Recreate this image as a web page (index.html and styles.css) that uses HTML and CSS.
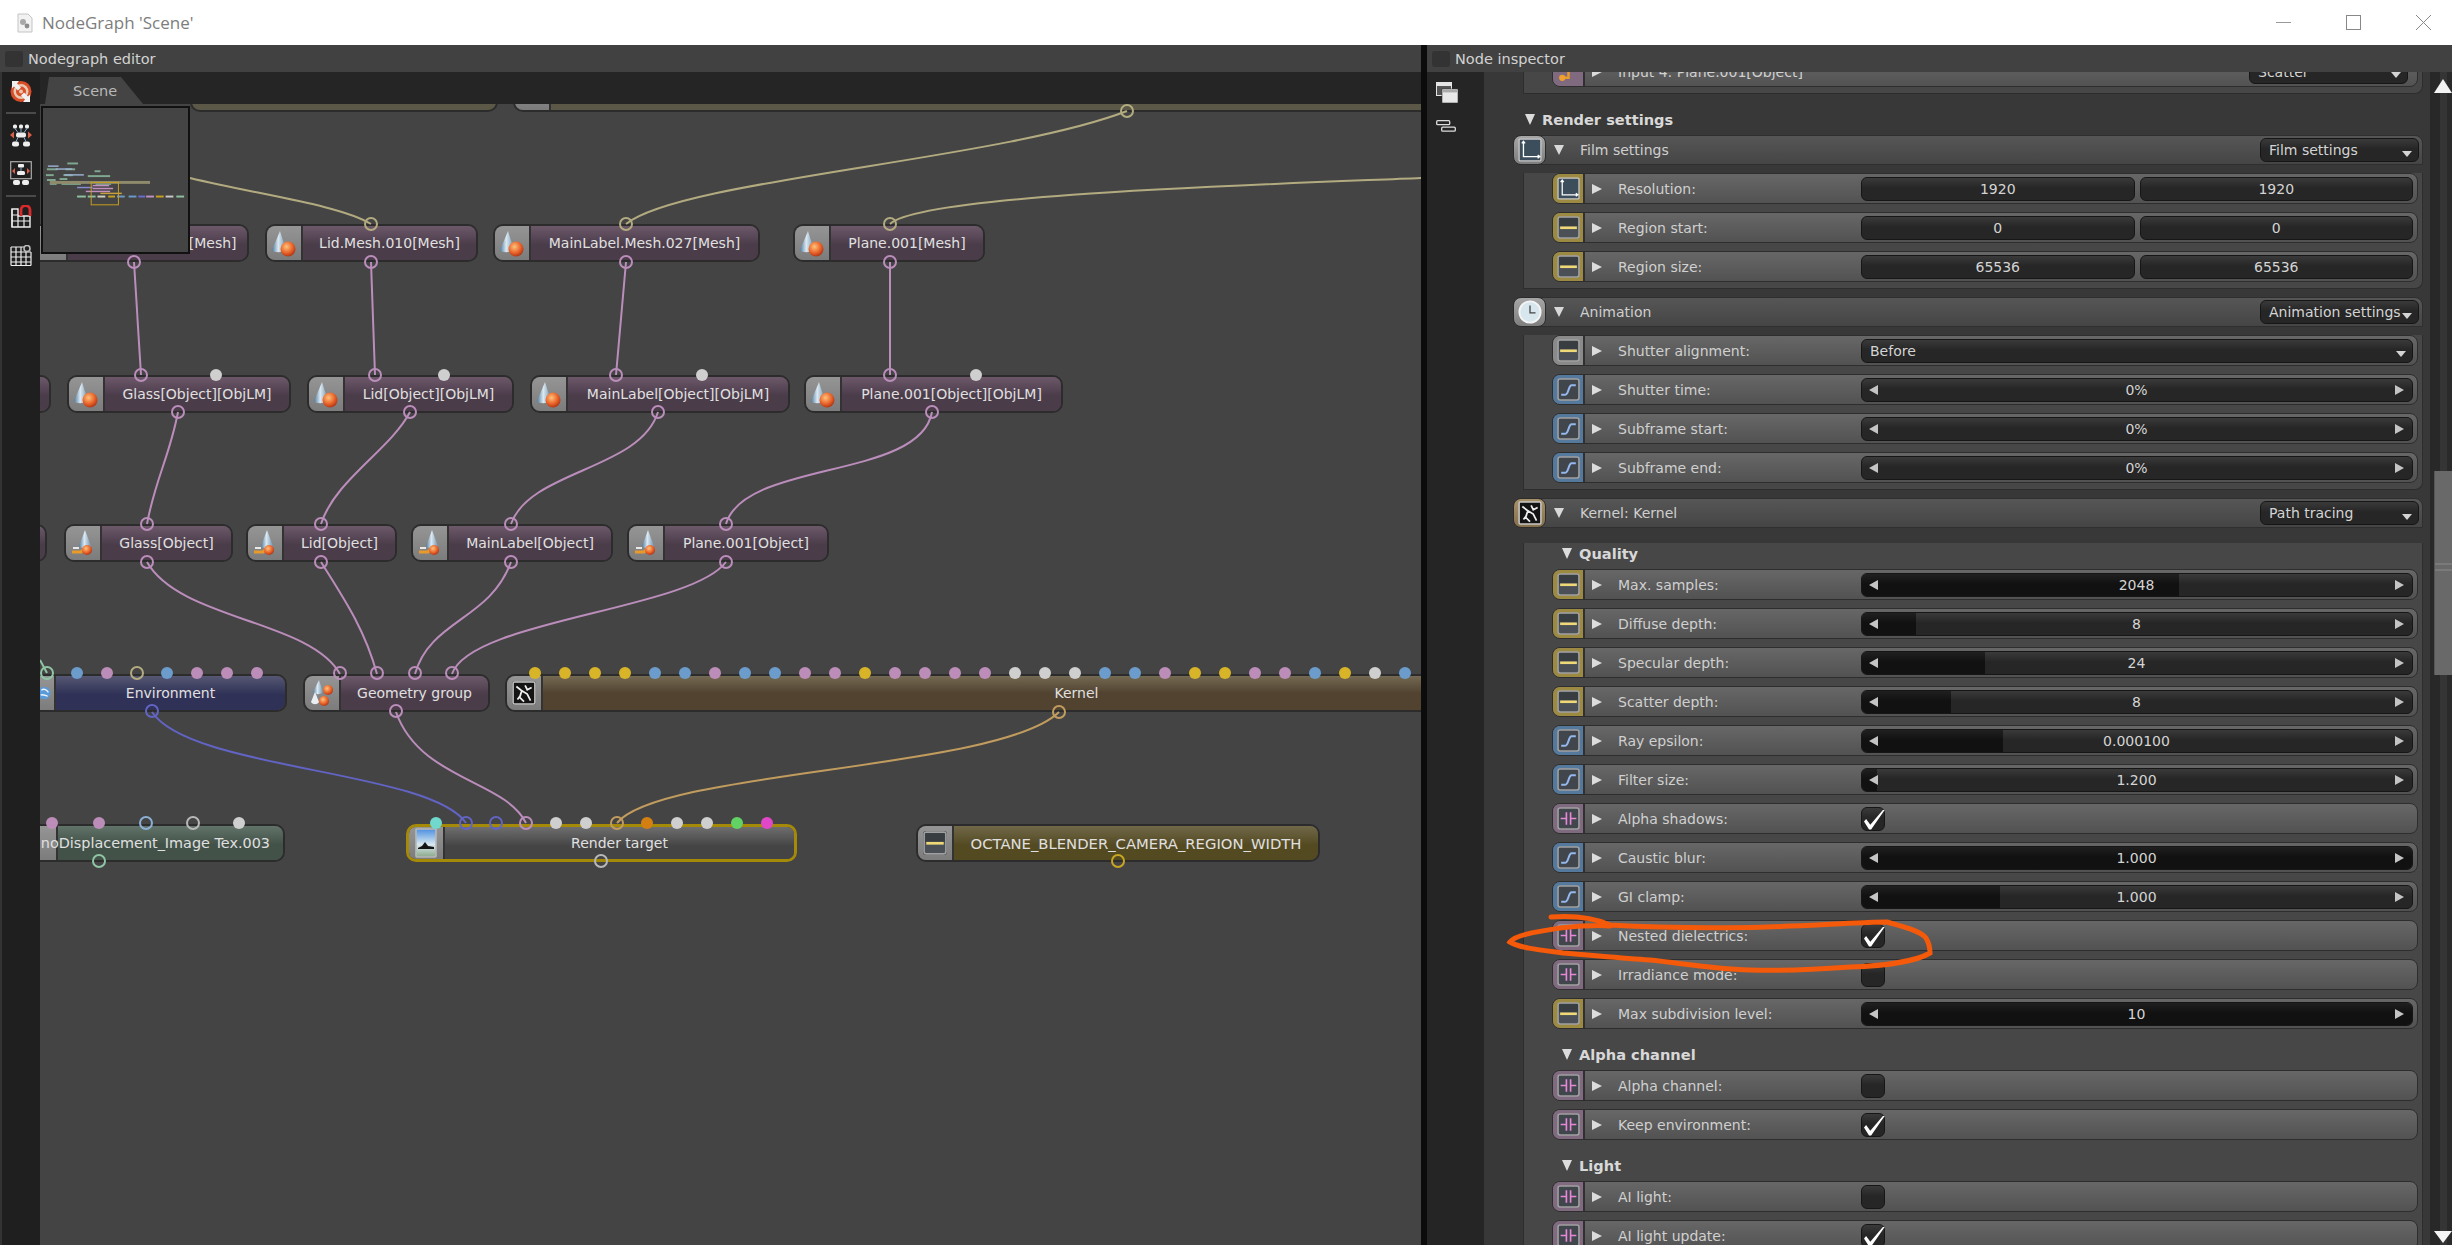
FILE: index.html
```html
<!DOCTYPE html>
<html lang="en">
<head>
    <meta charset="UTF-8">
    <meta name="viewport" content="width=device-width, initial-scale=1.0">
    <title>NodeGraph 'Scene'</title>
    <link rel="stylesheet" href="styles.css">
</head>
<body>

<svg class="sprites" width="0" height="0">
    <defs>
        <linearGradient id="cone" x1="0" y1="0" x2="1" y2="0"><stop offset="0" stop-color="#4f7c9f"/><stop offset="0.45" stop-color="#dce9f2"/><stop offset="1" stop-color="#6f93ad"/></linearGradient>
        <radialGradient id="ball" cx="0.4" cy="0.35" r="0.7"><stop offset="0" stop-color="#ffc27a"/><stop offset="0.6" stop-color="#e8622a"/><stop offset="1" stop-color="#a83010"/></radialGradient>
        <linearGradient id="sky" x1="0" y1="0" x2="0" y2="1"><stop offset="0" stop-color="#4c8fe0"/><stop offset="0.55" stop-color="#d8e8f0"/><stop offset="1" stop-color="#8aa888"/></linearGradient>
    </defs>
    <symbol id="ic-int" viewBox="0 0 22 22"><rect x="1" y="1" width="20" height="20" rx="2" fill="#4a5055" stroke="#a0a0a0" stroke-width="1.5"/><rect x="2" y="2" width="18" height="8" fill="#383d42"/><rect x="3" y="10" width="16" height="2.5" fill="#eed878"/></symbol>
    <symbol id="ic-float" viewBox="0 0 22 22"><rect x="1" y="1" width="20" height="20" rx="2" fill="#40464c" stroke="#a0a0a0" stroke-width="1.5"/><path d="M4 16H8C11 16 11 7 14 7H18" fill="none" stroke="#94b8ee" stroke-width="2"/></symbol>
    <symbol id="ic-bool" viewBox="0 0 22 22"><rect x="1" y="1" width="20" height="20" rx="2" fill="#40464c" stroke="#a0a0a0" stroke-width="1.5"/><path d="M9 5V17M13 5V17M3.5 11H9M13 11H18.5" fill="none" stroke="#e588d8" stroke-width="1.6"/></symbol>
    <symbol id="ic-film" viewBox="0 0 22 22"><rect x="1" y="1" width="20" height="20" rx="1" fill="#3c4e5c" stroke="#c8c8c8" stroke-width="1.2"/><path d="M5 3V17H20M3.5 5L5 3L6.5 5M18 15.5L20 17L18 18.5" fill="none" stroke="#fff" stroke-width="1.2"/></symbol>
    <symbol id="ic-link" viewBox="0 0 22 22"><path d="M5 17H11V8H17" fill="none" stroke="#e89a2a" stroke-width="2.4"/><circle cx="5" cy="17" r="3" fill="#f0a030"/><circle cx="18" cy="7" r="3" fill="#e03020"/></symbol>
    <symbol id="ic-clock" viewBox="0 0 26 26"><circle cx="13" cy="13" r="11.5" fill="#d8e6ee" stroke="#f4f4f4" stroke-width="2"/><path d="M13 6V14H19" fill="none" stroke="#444" stroke-width="1.4"/></symbol>
    <symbol id="ic-kernel" viewBox="0 0 22 22"><rect x="1" y="1" width="20" height="20" rx="1" fill="#141414" stroke="#c8c8c8" stroke-width="1.4"/><path d="M4 5L9 9L7 15L11 19M9 9L14 12L17 18M12 4L14 8L18 6M5 17L8 13" fill="none" stroke="#f0f0f0" stroke-width="1.6"/></symbol>
    <symbol id="nd-mat" viewBox="0 0 28 30"><path d="M10 3L2 22C4 25 12 25 16 22Z" fill="url(#cone)"/><circle cx="18" cy="21" r="7.5" fill="url(#ball)"/></symbol>
    <symbol id="nd-obj" viewBox="0 0 28 30"><path d="M16 2L10 18C12 21 18 21 22 18Z" fill="url(#cone)"/><path d="M3 24H12L16 20" fill="none" stroke="#e89a2a" stroke-width="3"/><circle cx="18" cy="22" r="5" fill="url(#ball)"/><path d="M4 20H10" stroke="#e8e8e8" stroke-width="2"/></symbol>
    <symbol id="nd-geo" viewBox="0 0 28 30"><path d="M11 2L5 14C7 17 12 17 15 14Z" fill="url(#cone)"/><path d="M7 14L3 24C5 27 9 27 11 24Z" fill="#e8f0f4"/><circle cx="20" cy="12" r="5" fill="url(#ball)"/><circle cx="16" cy="23" r="5" fill="url(#ball)"/></symbol>
    <symbol id="nd-rt" viewBox="0 0 22 30"><rect x="1" y="1" width="20" height="28" rx="1" fill="url(#sky)" stroke="#b8b8b8" stroke-width="1.6"/><path d="M3 20L7 18L10 14L13 18L19 19V21H3Z" fill="#141414"/></symbol>
    <symbol id="nd-env" viewBox="0 0 20 24"><circle cx="6" cy="12" r="9" fill="#5a9ad8"/><path d="M2 8C6 5 10 8 12 11M1 15C5 13 9 17 11 16" fill="none" stroke="#eef4f8" stroke-width="2"/></symbol>
</svg>

<div class="window">

    <div class="titlebar">
        <div class="title">
            <svg class="doc-icon" viewBox="0 0 16 20"><path d="M1 1H11L15 5V19H1Z" fill="#f2f2f2" stroke="#c4c4c4"/><circle cx="6" cy="9" r="3" fill="#a8a8a8"/><circle cx="10" cy="13" r="2.4" fill="#8c8c8c"/></svg>
            <span>NodeGraph 'Scene'</span>
        </div>
        <div class="win-btns">
            <svg class="win-btn" viewBox="0 0 15 15"><path d="M0 7.5H15" stroke="#999"/></svg>
            <svg class="win-btn" viewBox="0 0 15 15"><rect x="0.5" y="0.5" width="14" height="14" fill="none" stroke="#888"/></svg>
            <svg class="win-btn" viewBox="0 0 15 15"><path d="M0 0L15 15M15 0L0 15" stroke="#888"/></svg>
        </div>
    </div>

    <div class="panes">

        <!-- node graph -->
        <div class="pane-graph">
            <div class="pane-head"><i class="pane-check"></i><span>Nodegraph editor</span></div>
            <div class="graph-area">
                <div class="tools">
                    <svg class="tool" viewBox="0 0 22 23"><circle cx="11" cy="11.5" r="10.5" fill="#d84e28"/><circle cx="11" cy="11.5" r="7.5" fill="#e8c8b0"/><circle cx="11" cy="11.5" r="5" fill="#d84e28"/><circle cx="11" cy="11.5" r="2" fill="#e8c8b0"/><path d="M2 1H9L7 3.5L11 7.5L8 10.5L4 6.5L2 8.5ZM20 22H13L15 19.5L11 15.5L14 12.5L18 16.5L20 14.5Z" fill="#f0f0f0"/></svg>
                    <div class="tool-sep"></div>
                    <svg class="tool" viewBox="0 0 22 22"><rect x="3" y="0" width="4" height="4" rx="1.5" fill="#eee"/><rect x="9" y="0" width="4" height="4" rx="1.5" fill="#eee"/><rect x="15" y="0" width="4" height="4" rx="1.5" fill="#eee"/><rect x="6" y="8" width="10" height="5" rx="2" fill="#eee"/><path d="M5 4L8 8M11 4V8M17 4L14 8M8 13L6 17M14 13L16 17" stroke="#88aacc"/><rect x="2" y="17" width="7" height="5" rx="2" fill="#eee"/><rect x="13" y="17" width="7" height="5" rx="2" fill="#eee"/><path d="M4 7V14L0 10.5ZM18 7V14L22 10.5Z" fill="#d8604a"/></svg>
                    <svg class="tool tool-fit" viewBox="0 0 22 25"><rect x="0.7" y="0.7" width="20.6" height="17" fill="none" stroke="#aaa" stroke-width="1.2"/><rect x="8" y="3" width="6" height="3.4" rx="1" fill="#eee"/><rect x="7" y="10" width="8" height="4" rx="1.5" fill="#eee"/><path d="M11 6V10" stroke="#88aacc"/><rect x="3" y="19" width="7" height="5" rx="2" fill="#eee"/><rect x="12" y="19" width="7" height="5" rx="2" fill="#eee"/><path d="M5 7V13L2 10ZM17 7V13L20 10Z" fill="#d8604a"/></svg>
                    <div class="tool-sep"></div>
                    <svg class="tool tool-mag" viewBox="0 0 22 23"><path d="M2 4H8V11H20V22H2Z" fill="none" stroke="#eee" stroke-width="1.4"/><path d="M2 10H8M2 16H20M8 11V22M14 11V22M2 4V22" stroke="#eee" stroke-width="1.2"/><path d="M11 11V5A4.5 4.5 0 0 1 20 5V11" fill="none" stroke="#d82a2a" stroke-width="2.8"/></svg>
                    <svg class="tool tool-grid" viewBox="0 0 22 21"><path d="M1 2H14M1 7H21M1 12H21M1 17H21M1 20.5H21M1 2V20.5M6 2V20.5M11 2V20.5M16 7V20.5M21 7V20.5" stroke="#eee" stroke-width="1.2"/><circle cx="17" cy="3.5" r="3" fill="none" stroke="#bbb" stroke-width="1.6"/></svg>
                </div>
                <div class="graph-main">
                    <div class="tabs"><div class="tab">Scene</div></div>
                    <div class="graph">

                        <div class="node top top-a"></div>
                        <div class="node top top-b"><span class="node-tab"></span><span class="node-body"></span></div>

                        <div class="node r-mesh mesh-glass mat"><span class="node-tab"></span><span class="node-body">Glass.Mesh.012[Mesh]</span></div>
                        <div class="node r-mesh mesh-lid mat"><span class="node-tab"><svg class="nd-ico"><use href="#nd-mat"/></svg></span><span class="node-body">Lid.Mesh.010[Mesh]</span></div>
                        <div class="node r-mesh mesh-main mat"><span class="node-tab"><svg class="nd-ico"><use href="#nd-mat"/></svg></span><span class="node-body">MainLabel.Mesh.027[Mesh]</span></div>
                        <div class="node r-mesh mesh-plane mat"><span class="node-tab"><svg class="nd-ico"><use href="#nd-mat"/></svg></span><span class="node-body">Plane.001[Mesh]</span></div>

                        <div class="node r-lm lm-cut mat"><span class="node-body"></span></div>
                        <div class="node r-lm lm-glass mat"><span class="node-tab"><svg class="nd-ico"><use href="#nd-mat"/></svg></span><span class="node-body">Glass[Object][ObjLM]</span></div>
                        <div class="node r-lm lm-lid mat"><span class="node-tab"><svg class="nd-ico"><use href="#nd-mat"/></svg></span><span class="node-body">Lid[Object][ObjLM]</span></div>
                        <div class="node r-lm lm-main mat"><span class="node-tab"><svg class="nd-ico"><use href="#nd-mat"/></svg></span><span class="node-body">MainLabel[Object][ObjLM]</span></div>
                        <div class="node r-lm lm-plane mat"><span class="node-tab"><svg class="nd-ico"><use href="#nd-mat"/></svg></span><span class="node-body">Plane.001[Object][ObjLM]</span></div>

                        <div class="node r-obj obj-cut mat"><span class="node-body"></span></div>
                        <div class="node r-obj obj-glass mat"><span class="node-tab"><svg class="nd-ico"><use href="#nd-obj"/></svg></span><span class="node-body">Glass[Object]</span></div>
                        <div class="node r-obj obj-lid mat"><span class="node-tab"><svg class="nd-ico"><use href="#nd-obj"/></svg></span><span class="node-body">Lid[Object]</span></div>
                        <div class="node r-obj obj-main mat"><span class="node-tab"><svg class="nd-ico"><use href="#nd-obj"/></svg></span><span class="node-body">MainLabel[Object]</span></div>
                        <div class="node r-obj obj-plane mat"><span class="node-tab"><svg class="nd-ico"><use href="#nd-obj"/></svg></span><span class="node-body">Plane.001[Object]</span></div>

                        <div class="node r-sys sys-env env"><span class="node-tab node-tab-end"><svg class="nd-env"><use href="#nd-env"/></svg></span><span class="node-body">Environment</span></div>
                        <div class="node r-sys sys-geo mat"><span class="node-tab"><svg class="nd-ico"><use href="#nd-geo"/></svg></span><span class="node-body">Geometry group</span></div>
                        <div class="node r-sys sys-kernel kern"><span class="node-tab"><svg class="nd-ico nd-box"><use href="#ic-kernel"/></svg></span><span class="node-body node-body-kernel">Kernel</span></div>

                        <div class="node r-out out-disp tex"><span class="node-tab"></span><span class="node-body node-body-end">noDisplacement_Image Tex.003</span></div>
                        <div class="node r-out out-rt rt"><span class="node-tab"><svg class="nd-ico nd-rt"><use href="#nd-rt"/></svg></span><span class="node-body">Render target</span></div>
                        <div class="node r-out out-width intval"><span class="node-tab"><svg class="nd-ico nd-box"><use href="#ic-int"/></svg></span><span class="node-body">OCTANE_BLENDER_CAMERA_REGION_WIDTH</span></div>

                        <!-- wires and pins use window coordinates -->
                        <svg class="wires" viewBox="40 104 1381 1141">
                            <g class="w-khaki">
                                <path d="M190 178C260 195 340 205 371 224"/>
                                <path d="M1127 111C1000 160 680 180 626 224"/>
                                <path d="M1421 178C1250 185 920 195 890 224"/>
                            </g>
                            <g class="w-pink">
                                <path d="M134 262L141 375"/>
                                <path d="M371 262L375 375"/>
                                <path d="M626 262L616 375"/>
                                <path d="M890 262L890 375"/>
                                <path d="M178 412C170 455 155 480 147 524"/>
                                <path d="M410 412C390 450 335 480 321 524"/>
                                <path d="M658 412C640 470 530 470 511 524"/>
                                <path d="M932 412C920 480 745 460 726 524"/>
                                <path d="M147 562C180 620 310 620 340 674"/>
                                <path d="M321 562C345 600 365 630 377 674"/>
                                <path d="M511 562C490 620 430 620 415 674"/>
                                <path d="M726 562C690 610 470 620 452 674"/>
                                <path d="M396 712C420 780 505 780 526 823"/>
                            </g>
                            <path class="w-indigo" d="M152 712C190 770 430 770 466 823"/>
                            <path class="w-tan" d="M1059 712C1000 770 660 770 617 823"/>
                            <path class="w-green" d="M47 673L40 660"/>

                            <g class="dots">
                                <circle class="dk" cx="371" cy="224"/><circle class="dk" cx="626" cy="224"/><circle class="dk" cx="890" cy="224"/><circle class="dk" cx="1127" cy="111"/>
                                <circle class="dp" cx="134" cy="262"/><circle class="dp" cx="371" cy="262"/><circle class="dp" cx="626" cy="262"/><circle class="dp" cx="890" cy="262"/>

                                <circle class="dp" cx="141" cy="375"/><circle class="dp" cx="375" cy="375"/><circle class="dp" cx="616" cy="375"/><circle class="dp" cx="890" cy="375"/>
                                <circle class="fg" cx="216" cy="375"/><circle class="fg" cx="444" cy="375"/><circle class="fg" cx="702" cy="375"/><circle class="fg" cx="976" cy="375"/>
                                <circle class="dp" cx="178" cy="412"/><circle class="dp" cx="410" cy="412"/><circle class="dp" cx="658" cy="412"/><circle class="dp" cx="932" cy="412"/>

                                <circle class="dp" cx="147" cy="524"/><circle class="dp" cx="321" cy="524"/><circle class="dp" cx="511" cy="524"/><circle class="dp" cx="726" cy="524"/>
                                <circle class="dp" cx="147" cy="562"/><circle class="dp" cx="321" cy="562"/><circle class="dp" cx="511" cy="562"/><circle class="dp" cx="726" cy="562"/>

                                <circle class="dgr" cx="47" cy="673"/><circle class="fb" cx="77" cy="673"/><circle class="fp" cx="107" cy="673"/><circle class="dk" cx="137" cy="673"/><circle class="fb" cx="167" cy="673"/><circle class="fp" cx="197" cy="673"/><circle class="fp" cx="227" cy="673"/><circle class="fp" cx="257" cy="673"/>
                                <circle class="di" cx="152" cy="711"/>
                                <circle class="dp" cx="340" cy="673"/><circle class="dp" cx="377" cy="673"/><circle class="dp" cx="415" cy="673"/><circle class="dp" cx="452" cy="673"/>
                                <circle class="dp" cx="396" cy="711"/>

                                <circle class="fy" cx="535" cy="673"/><circle class="fy" cx="565" cy="673"/><circle class="fy" cx="595" cy="673"/><circle class="fy" cx="625" cy="673"/>
                                <circle class="fb" cx="655" cy="673"/><circle class="fb" cx="685" cy="673"/><circle class="fp" cx="715" cy="673"/><circle class="fb" cx="745" cy="673"/><circle class="fb" cx="775" cy="673"/><circle class="fp" cx="805" cy="673"/>
                                <circle class="fp" cx="835" cy="673"/><circle class="fy" cx="865" cy="673"/><circle class="fp" cx="895" cy="673"/><circle class="fp" cx="925" cy="673"/><circle class="fp" cx="955" cy="673"/><circle class="fp" cx="985" cy="673"/>
                                <circle class="fg" cx="1015" cy="673"/><circle class="fg" cx="1045" cy="673"/><circle class="fg" cx="1075" cy="673"/><circle class="fb" cx="1105" cy="673"/><circle class="fb" cx="1135" cy="673"/><circle class="fp" cx="1165" cy="673"/>
                                <circle class="fy" cx="1195" cy="673"/><circle class="fy" cx="1225" cy="673"/><circle class="fp" cx="1255" cy="673"/><circle class="fp" cx="1285" cy="673"/><circle class="fb" cx="1315" cy="673"/><circle class="fy" cx="1345" cy="673"/><circle class="fg" cx="1375" cy="673"/><circle class="fb" cx="1405" cy="673"/>
                                <circle class="dt" cx="1059" cy="712"/>

                                <circle class="fp" cx="52" cy="823"/><circle class="fp" cx="99" cy="823"/><circle class="db" cx="146" cy="823"/><circle class="dw" cx="193" cy="823"/><circle class="fg" cx="239" cy="823"/>
                                <circle class="dgr" cx="99" cy="861"/>

                                <circle class="fc" cx="436" cy="823"/><circle class="di" cx="466" cy="823"/><circle class="di" cx="496" cy="823"/><circle class="dp" cx="526" cy="823"/><circle class="fg" cx="556" cy="823"/><circle class="fg" cx="586" cy="823"/>
                                <circle class="dt" cx="617" cy="823"/><circle class="fo" cx="647" cy="823"/><circle class="fg" cx="677" cy="823"/><circle class="fg" cx="707" cy="823"/><circle class="fl" cx="737" cy="823"/><circle class="fm" cx="767" cy="823"/>
                                <circle class="dw" cx="601" cy="861"/>
                                <circle class="dy" cx="1118" cy="861"/>
                            </g>
                        </svg>

                        <svg class="minimap" viewBox="41 106 149 148">
                            <g fill="#7fa890">
                                <rect x="66" y="162" width="11" height="2"/><rect x="45" y="168" width="11" height="2"/><rect x="64" y="168" width="10" height="2"/><rect x="44" y="174" width="8" height="2"/><rect x="62" y="174" width="9" height="2"/>
                                <rect x="45" y="179" width="9" height="2"/><rect x="58" y="178" width="8" height="2"/><rect x="67" y="175" width="5" height="1"/><rect x="48" y="183" width="7" height="2"/><rect x="60" y="183" width="20" height="2"/>
                                <rect x="87" y="175" width="23" height="2"/><rect x="94" y="170" width="6" height="2"/><rect x="95" y="183" width="16" height="2"/>
                            </g>
                            <g fill="#9ab0d0"><rect x="46" y="165" width="11" height="1.5"/><rect x="54" y="168" width="17" height="1.5"/><rect x="63" y="174" width="20" height="1.5"/></g>
                            <rect x="48" y="181" width="103" height="3" fill="#8f8a6c"/>
                            <g fill="#c48fc0"><rect x="92" y="185" width="17" height="1.5"/><rect x="92" y="188" width="21" height="1.5"/><rect x="85" y="191" width="25" height="1.5"/></g>
                            <rect x="76" y="187" width="16" height="1.5" fill="#8a8ad0"/>
                            <rect x="100" y="193" width="22" height="1.5" fill="#c8a040"/>
                            <g class="mini-dash">
                                <rect x="76" y="196" width="9" height="2" fill="#8fc0a0"/><rect x="87" y="196" width="8" height="2" fill="#8fc0a0"/><rect x="97" y="196" width="8" height="2" fill="#d0d0c0"/><rect x="108" y="196" width="7" height="2" fill="#c8a020"/><rect x="117" y="196" width="8" height="2" fill="#6a9ac8"/><rect x="129" y="196" width="8" height="2" fill="#6a9ac8"/><rect x="139" y="196" width="7" height="2" fill="#6a6ad0"/><rect x="147" y="196" width="8" height="2" fill="#c090c0"/><rect x="157" y="196" width="8" height="2" fill="#c8a020"/><rect x="167" y="196" width="8" height="2" fill="#c8c8c8"/><rect x="178" y="196" width="8" height="2" fill="#8fc0a0"/>
                            </g>
                            <rect x="90.5" y="182.5" width="28" height="23" fill="none" stroke="#c8a020"/>
                        </svg>
                    </div>
                </div>
            </div>
        </div>

        <div class="divider"></div>

        <!-- inspector -->
        <div class="pane-inspector">
            <div class="pane-head"><i class="pane-check"></i><span>Node inspector</span></div>
            <div class="inspector-area">
                <div class="side">
                    <svg class="side-a" viewBox="0 0 22 21"><rect x="0" y="0" width="16" height="14" fill="#e4e4e4"/><rect x="1" y="4" width="14" height="9" fill="#555"/><rect x="6" y="7" width="16" height="14" fill="#e8e8e8" stroke="#333" stroke-width="0.6"/><rect x="7" y="8" width="14" height="2.4" fill="#aaa"/></svg>
                    <svg class="side-b" viewBox="0 0 20 12"><rect x="0.7" y="0.7" width="13" height="4" rx="1" fill="none" stroke="#ddd" stroke-width="1.3"/><rect x="5.7" y="7.2" width="13.6" height="4" rx="1" fill="none" stroke="#ddd" stroke-width="1.3"/></svg>
                </div>

                <div class="content">

                    <div class="group-body group-first">
                        <div class="row"><span class="row-tab tab-pink"><svg class="row-ico"><use href="#ic-link"/></svg></span><i class="arrow"></i><span class="row-label">Input 4: Plane.001[Object]</span><div class="row-spacer"></div><div class="drop drop-small"><span>Scatter</span><i class="drop-arrow"></i></div></div>
                    </div>

                    <div class="section-title"><i class="tri-down"></i>Render settings</div>

                    <div class="group">
                        <div class="group-head">
                            <span class="group-icon"><svg class="group-ico"><use href="#ic-film"/></svg></span>
                            <div class="group-bar"><i class="tri-small"></i><span class="group-name">Film settings</span><div class="drop drop-small"><span>Film settings</span><i class="drop-arrow"></i></div></div>
                        </div>
                        <div class="group-body">
                            <div class="row"><span class="row-tab tab-gold"><svg class="row-ico"><use href="#ic-film"/></svg></span><i class="arrow"></i><span class="row-label">Resolution:</span><div class="pair"><span class="field">1920</span><span class="field">1920</span></div></div>
                            <div class="row"><span class="row-tab tab-gold"><svg class="row-ico"><use href="#ic-int"/></svg></span><i class="arrow"></i><span class="row-label">Region start:</span><div class="pair"><span class="field">0</span><span class="field">0</span></div></div>
                            <div class="row"><span class="row-tab tab-gold"><svg class="row-ico"><use href="#ic-int"/></svg></span><i class="arrow"></i><span class="row-label">Region size:</span><div class="pair"><span class="field">65536</span><span class="field">65536</span></div></div>
                        </div>
                    </div>

                    <div class="group">
                        <div class="group-head">
                            <span class="group-icon"><svg class="group-ico"><use href="#ic-clock"/></svg></span>
                            <div class="group-bar"><i class="tri-small"></i><span class="group-name">Animation</span><div class="drop drop-small"><span>Animation settings</span><i class="drop-arrow"></i></div></div>
                        </div>
                        <div class="group-body">
                            <div class="row"><span class="row-tab tab-grey"><svg class="row-ico"><use href="#ic-int"/></svg></span><i class="arrow"></i><span class="row-label">Shutter alignment:</span><div class="drop drop-wide"><span>Before</span><i class="drop-arrow"></i></div></div>
                            <div class="row"><span class="row-tab tab-blue"><svg class="row-ico"><use href="#ic-float"/></svg></span><i class="arrow"></i><span class="row-label">Shutter time:</span><div class="slider"><i class="nudge-l"></i><span class="slider-val">0%</span><i class="nudge-r"></i></div></div>
                            <div class="row"><span class="row-tab tab-blue"><svg class="row-ico"><use href="#ic-float"/></svg></span><i class="arrow"></i><span class="row-label">Subframe start:</span><div class="slider"><i class="nudge-l"></i><span class="slider-val">0%</span><i class="nudge-r"></i></div></div>
                            <div class="row"><span class="row-tab tab-blue"><svg class="row-ico"><use href="#ic-float"/></svg></span><i class="arrow"></i><span class="row-label">Subframe end:</span><div class="slider"><i class="nudge-l"></i><span class="slider-val">0%</span><i class="nudge-r"></i></div></div>
                        </div>
                    </div>

                    <div class="group">
                        <div class="group-head">
                            <span class="group-icon group-icon-tan"><svg class="group-ico"><use href="#ic-kernel"/></svg></span>
                            <div class="group-bar"><i class="tri-small"></i><span class="group-name">Kernel: Kernel</span><div class="drop drop-small"><span>Path tracing</span><i class="drop-arrow"></i></div></div>
                        </div>
                        <div class="group-body">
                            <div class="subhead"><i class="tri-down"></i>Quality</div>
                            <div class="row"><span class="row-tab tab-gold"><svg class="row-ico"><use href="#ic-int"/></svg></span><i class="arrow"></i><span class="row-label">Max. samples:</span><div class="slider"><span class="slider-fill" style="width:57.6%"></span><i class="nudge-l"></i><span class="slider-val">2048</span><i class="nudge-r"></i></div></div>
                            <div class="row"><span class="row-tab tab-gold"><svg class="row-ico"><use href="#ic-int"/></svg></span><i class="arrow"></i><span class="row-label">Diffuse depth:</span><div class="slider"><span class="slider-fill" style="width:9.8%"></span><i class="nudge-l"></i><span class="slider-val">8</span><i class="nudge-r"></i></div></div>
                            <div class="row"><span class="row-tab tab-gold"><svg class="row-ico"><use href="#ic-int"/></svg></span><i class="arrow"></i><span class="row-label">Specular depth:</span><div class="slider"><span class="slider-fill" style="width:22.3%"></span><i class="nudge-l"></i><span class="slider-val">24</span><i class="nudge-r"></i></div></div>
                            <div class="row"><span class="row-tab tab-gold"><svg class="row-ico"><use href="#ic-int"/></svg></span><i class="arrow"></i><span class="row-label">Scatter depth:</span><div class="slider"><span class="slider-fill" style="width:16.1%"></span><i class="nudge-l"></i><span class="slider-val">8</span><i class="nudge-r"></i></div></div>
                            <div class="row"><span class="row-tab tab-blue"><svg class="row-ico"><use href="#ic-float"/></svg></span><i class="arrow"></i><span class="row-label">Ray epsilon:</span><div class="slider"><span class="slider-fill" style="width:25.7%"></span><i class="nudge-l"></i><span class="slider-val">0.000100</span><i class="nudge-r"></i></div></div>
                            <div class="row"><span class="row-tab tab-blue"><svg class="row-ico"><use href="#ic-float"/></svg></span><i class="arrow"></i><span class="row-label">Filter size:</span><div class="slider"><span class="slider-fill" style="width:2.7%"></span><i class="nudge-l"></i><span class="slider-val">1.200</span><i class="nudge-r"></i></div></div>
                            <div class="row"><span class="row-tab tab-pink"><svg class="row-ico"><use href="#ic-bool"/></svg></span><i class="arrow"></i><span class="row-label">Alpha shadows:</span><span class="check on"></span></div>
                            <div class="row"><span class="row-tab tab-blue"><svg class="row-ico"><use href="#ic-float"/></svg></span><i class="arrow"></i><span class="row-label">Caustic blur:</span><div class="slider"><span class="slider-fill" style="width:100%"></span><i class="nudge-l"></i><span class="slider-val">1.000</span><i class="nudge-r"></i></div></div>
                            <div class="row"><span class="row-tab tab-blue"><svg class="row-ico"><use href="#ic-float"/></svg></span><i class="arrow"></i><span class="row-label">GI clamp:</span><div class="slider"><span class="slider-fill" style="width:25%"></span><i class="nudge-l"></i><span class="slider-val">1.000</span><i class="nudge-r"></i></div></div>
                            <div class="row"><span class="row-tab tab-pink"><svg class="row-ico"><use href="#ic-bool"/></svg></span><i class="arrow"></i><span class="row-label">Nested dielectrics:</span><span class="check on"></span></div>
                            <div class="row"><span class="row-tab tab-pink"><svg class="row-ico"><use href="#ic-bool"/></svg></span><i class="arrow"></i><span class="row-label">Irradiance mode:</span><span class="check"></span></div>
                            <div class="row"><span class="row-tab tab-gold"><svg class="row-ico"><use href="#ic-int"/></svg></span><i class="arrow"></i><span class="row-label">Max subdivision level:</span><div class="slider"><span class="slider-fill" style="width:100%"></span><i class="nudge-l"></i><span class="slider-val">10</span><i class="nudge-r"></i></div></div>

                            <div class="subhead"><i class="tri-down"></i>Alpha channel</div>
                            <div class="row"><span class="row-tab tab-pink"><svg class="row-ico"><use href="#ic-bool"/></svg></span><i class="arrow"></i><span class="row-label">Alpha channel:</span><span class="check"></span></div>
                            <div class="row"><span class="row-tab tab-pink"><svg class="row-ico"><use href="#ic-bool"/></svg></span><i class="arrow"></i><span class="row-label">Keep environment:</span><span class="check on"></span></div>

                            <div class="subhead"><i class="tri-down"></i>Light</div>
                            <div class="row"><span class="row-tab tab-pink"><svg class="row-ico"><use href="#ic-bool"/></svg></span><i class="arrow"></i><span class="row-label">AI light:</span><span class="check"></span></div>
                            <div class="row"><span class="row-tab tab-pink"><svg class="row-ico"><use href="#ic-bool"/></svg></span><i class="arrow"></i><span class="row-label">AI light update:</span><span class="check on"></span></div>
                        </div>
                    </div>
                </div>

                <div class="scrollbar">
                    <i class="scroll-up"></i>
                    <div class="scroll-thumb"></div>
                    <i class="scroll-down"></i>
                </div>
            </div>
        </div>
    </div>

    <!-- hand drawn annotation on the screenshot -->
    <svg class="scribble" viewBox="0 0 2452 1245">
        <path d="M1551 917C1565 916 1590 916 1610 925C1680 929 1760 928 1790 926C1830 925 1860 922 1887 922C1900 926 1920 930 1926 938C1930 945 1930 950 1930 953C1915 962 1880 966 1850 967C1810 970 1780 971 1750 970C1710 969 1680 963 1650 960C1620 958 1590 955 1563 953C1540 950 1520 948 1510 942C1515 935 1535 932 1560 928C1580 926 1600 925 1610 926"/>
    </svg>
</div>

</body>
</html>
```

FILE: styles.css
```css
* {
    margin: 0;
    padding: 0;
    box-sizing: border-box;
}

body {
    margin: 0;
    background: #333;
    font-family: "DejaVu Sans", sans-serif;
    font-size: 14px;
    color: #cfcfcf;
    overflow: hidden;
}

i {
    display: block;
}

.sprites {
    position: absolute;
}

.window {
    position: relative;
    width: 2452px;
    height: 1245px;
    display: flex;
    flex-direction: column;
    overflow: hidden;
}

/* title bar */
.titlebar {
    height: 45px;
    flex: none;
    background: white;
    display: flex;
    align-items: center;
    justify-content: space-between;
    padding: 0 21px 0 17px;
}

.title {
    display: flex;
    align-items: center;
    gap: 9px;
    font-family: "Open Sans", sans-serif;
    font-size: 17px;
    color: #7d7d7d;
}

.doc-icon {
    width: 16px;
    height: 20px;
}

.win-btns {
    display: flex;
    gap: 55px;
}

.win-btn {
    width: 15px;
    height: 15px;
}

.panes {
    flex: 1;
    min-height: 0;
    display: flex;
}

.divider {
    width: 6px;
    background: #0c0c0c;
}

.pane-head {
    height: 27px;
    flex: none;
    background: #414141;
    display: flex;
    align-items: center;
    gap: 5px;
    padding-left: 5px;
    color: #d2d2d2;
    font-size: 14.5px;
}

.pane-check {
    width: 18px;
    height: 16px;
    border-radius: 3px;
    background: #333;
}

/* node graph */
.pane-graph {
    width: 1421px;
    flex: none;
    display: flex;
    flex-direction: column;
}

.graph-area {
    flex: 1;
    min-height: 0;
    display: flex;
}

.tools {
    width: 38px;
    margin-left: 2px;
    background: #1f1f1f;
    display: flex;
    flex-direction: column;
    align-items: center;
    padding-top: 8px;
}

.tool {
    width: 22px;
    height: 23px;
    flex: none;
}

.tool-sep {
    width: 30px;
    height: 2px;
    background: #4a4a4a;
    margin: 9px 0 10px;
}

.tool-fit {
    height: 25px;
    margin-top: 14px;
}

.tool-mag {
    margin-top: -2px;
}

.tool-grid {
    height: 21px;
    margin-top: 17px;
}

.graph-main {
    width: 1381px;
    display: flex;
    flex-direction: column;
}

.tabs {
    height: 32px;
    flex: none;
    background: #252525;
    padding: 5px 0 0 5px;
}

.tab {
    width: 98px;
    height: 27px;
    background: #444;
    clip-path: polygon(4px 0, 76px 0, 98px 100%, 0 100%);
    color: #b8b8b8;
    font-size: 14.5px;
    line-height: 29px;
    padding-left: 28px;
}

.graph {
    position: relative;
    flex: 1;
    background: #444;
    overflow: hidden;
}

.node {
    position: absolute;
    height: 38px;
    display: flex;
    border: 2px solid #2c2c2c;
    border-radius: 10px;
    overflow: hidden;
    color: #e0e0e0;
    font-size: 14px;
    white-space: nowrap;
}

.node-tab {
    width: 36px;
    flex: none;
    background: linear-gradient(#959595, #7c7c7c);
    border-right: 2px solid #333;
    display: flex;
    align-items: center;
    justify-content: center;
}

.node-tab-end {
    justify-content: flex-end;
}

.nd-ico {
    width: 28px;
    height: 30px;
}

.nd-env {
    width: 14px;
    height: 24px;
}

.nd-box {
    width: 24px;
    height: 24px;
    background: #444;
    border-radius: 3px;
}

.nd-rt {
    width: 24px;
    height: 30px;
}

.node-body {
    flex: 1;
    min-width: 0;
    display: flex;
    align-items: center;
    justify-content: center;
}

.node-body-kernel {
    align-items: flex-start;
    padding-top: 9px;
}

.node-body-end {
    justify-content: flex-end;
    padding-right: 13px;
    font-size: 14.4px;
}

.intval {
    font-size: 14.8px;
}

.mat .node-body { background: linear-gradient(#6c5869, #4b3c4a 55%); }
.env .node-body { background: linear-gradient(#555772, #2f3156 55%); }
.kern .node-body { background: linear-gradient(#746953, #514330 50%); }
.tex .node-body { background: linear-gradient(#62736a, #425248 55%); }
.rt .node-body { background: linear-gradient(#6e6e6e, #444 60%); }
.intval .node-body { background: linear-gradient(#71684a, #544a22 55%); }

.rt {
    border: 3px solid #a58a08;
}

.top {
    top: -30px;
}

.top .node-body,
.top-a {
    background: #5c5847;
}

.top-a { left: 150px; width: 308px; }
.top-b { left: 473px; width: 1000px; }

.r-mesh { top: 120px; }
.r-lm { top: 271px; }
.r-obj { top: 420px; }
.r-sys { top: 570px; }
.r-out { top: 720px; }

.mesh-glass { left: -10px; width: 219px; }
.mesh-lid { left: 225px; width: 213px; }
.mesh-main { left: 453px; width: 267px; }
.mesh-plane { left: 753px; width: 192px; }

.lm-cut { left: -40px; width: 51px; }
.lm-glass { left: 27px; width: 224px; }
.lm-lid { left: 267px; width: 207px; }
.lm-main { left: 490px; width: 260px; }
.lm-plane { left: 764px; width: 259px; }

.obj-cut { left: -40px; width: 47px; }
.obj-glass { left: 24px; width: 169px; }
.obj-lid { left: 206px; width: 151px; }
.obj-main { left: 371px; width: 202px; }
.obj-plane { left: 587px; width: 202px; }

.sys-env { left: -22px; width: 269px; }
.sys-geo { left: 263px; width: 187px; }
.sys-kernel { left: 465px; width: 1107px; }

.out-disp { left: -20px; width: 265px; }
.out-rt { left: 366px; width: 391px; }
.out-width { left: 876px; width: 404px; }

/* wires */
.wires {
    position: absolute;
    left: 0;
    top: 0;
    width: 1381px;
    height: 1141px;
    fill: none;
    stroke-width: 2;
}

.w-khaki { stroke: #b3ab80; }
.w-pink { stroke: #bb8dbb; }
.w-indigo { stroke: #6264c4; }
.w-tan { stroke: #c19c5e; }
.w-green { stroke: #8fc4a4; }

.dots circle { r: 6px; stroke-width: 2; }

.fp { fill: #bb8db8; stroke: none; }
.fb { fill: #6c9ccb; stroke: none; }
.fy { fill: #d8b428; stroke: none; }
.fg { fill: #cfcfcf; stroke: none; }
.fc { fill: #70d8cc; stroke: none; }
.fo { fill: #d47f12; stroke: none; }
.fl { fill: #62d264; stroke: none; }
.fm { fill: #e048c8; stroke: none; }
.dk { stroke: #b3ab80; }
.dp { stroke: #bb8dbb; }
.di { stroke: #6264c4; }
.dt { stroke: #c19c5e; }
.db { stroke: #8cb0d4; }
.dw { stroke: #b8b8b8; }
.dy { stroke: #c8a620; }
.dgr { stroke: #8fc4a4; }

.minimap {
    position: absolute;
    left: 1px;
    top: 2px;
    width: 149px;
    height: 148px;
    background: #444;
    border: 2px solid #111;
}

/* inspector */
.pane-inspector {
    flex: 1;
    min-width: 0;
    display: flex;
    flex-direction: column;
}

.inspector-area {
    flex: 1;
    min-height: 0;
    display: flex;
}

.side {
    width: 57px;
    flex: none;
    background: #252525;
    display: flex;
    flex-direction: column;
    padding: 10px 0 0 9px;
}

.side-a {
    width: 22px;
    height: 21px;
}

.side-b {
    width: 20px;
    height: 12px;
    margin-top: 17px;
}

.content {
    flex: 1;
    min-width: 0;
    background: #383838;
    overflow: hidden;
    padding: 0 7px 0 29px;
}

.section-title,
.subhead {
    height: 20px;
    display: flex;
    align-items: center;
    font-weight: bold;
    font-size: 14.6px;
    color: #d8d8d8;
}

.section-title {
    margin: 15px 0 6px 12px;
}

.subhead {
    margin: 15px 0 6px 10px;
}

.subhead + .row {
    margin-top: 0;
}

.tri-down {
    width: 0;
    height: 0;
    margin-right: 7px;
    border-left: 5.5px solid transparent;
    border-right: 5.5px solid transparent;
    border-top: 11px solid #dcdcdc;
}

.tri-small {
    width: 0;
    height: 0;
    border-left: 5px solid transparent;
    border-right: 5px solid transparent;
    border-top: 10px solid #d8d8d8;
}

.group {
    margin-bottom: 8px;
}

.group-head {
    height: 30px;
    display: flex;
}

.group-icon {
    width: 33px;
    flex: none;
    position: relative;
    z-index: 1;
    background: linear-gradient(#a6a6a6, #7e7e7e);
    border: 1px solid #2c2c2c;
    border-radius: 8px;
    display: flex;
    align-items: center;
    justify-content: center;
}

.group-icon-tan {
    background: linear-gradient(#a89168, #85704c);
}

.group-ico {
    width: 24px;
    height: 24px;
}

.group-bar {
    flex: 1;
    min-width: 0;
    margin-left: -10px;
    background: linear-gradient(#565656, #454545);
    border: 1px solid #2f2f2f;
    border-radius: 0 8px 0 0;
    display: flex;
    align-items: center;
    padding: 0 3px 0 17px;
}

.group-name {
    margin-left: 16px;
    flex: 1;
}

.group-body {
    margin-left: 10px;
    background: #474747;
    border: 1px solid #2d2d2d;
    border-top: 0;
    border-radius: 0 0 8px 0;
    padding: 0 4px 6px 28px;
}

.group-first {
    margin-top: -24px;
}

.row {
    height: 31px;
    margin-top: 8px;
    background: linear-gradient(#676767, #525252);
    border: 1px solid #2e2e2e;
    border-radius: 8px;
    display: flex;
    align-items: center;
    overflow: hidden;
    color: #d0d0d0;
}

.row-tab {
    width: 32px;
    flex: none;
    align-self: stretch;
    display: flex;
    align-items: center;
    justify-content: center;
    border-right: 2px solid #303030;
}

.tab-gold { background: #9c8a42; }
.tab-blue { background: #55799c; }
.tab-pink { background: #806a80; }
.tab-grey { background: #8a8a8a; }

.row-ico {
    width: 23px;
    height: 23px;
}

.arrow {
    width: 0;
    height: 0;
    margin-left: 7px;
    border-top: 5.5px solid transparent;
    border-bottom: 5.5px solid transparent;
    border-left: 10px solid #dcdcdc;
}

.row-label {
    width: 243px;
    flex: none;
    margin-left: 16px;
    white-space: nowrap;
}

.row-spacer {
    flex: 1;
}

.pair {
    flex: 1;
    display: flex;
    gap: 5px;
    margin-right: 4px;
}

.field,
.slider,
.drop,
.check {
    height: 24px;
    background: linear-gradient(#3a3a3a, #262626 45%);
    border: 1px solid #161616;
    border-radius: 6px;
    color: #d4d4d4;
}

.field {
    flex: 1;
    display: flex;
    align-items: center;
    justify-content: center;
}

.slider {
    position: relative;
    flex: 1;
    margin-right: 4px;
    display: flex;
    align-items: center;
    justify-content: space-between;
    padding: 0 8px 0 7px;
    overflow: hidden;
}

.slider-fill {
    position: absolute;
    left: 0;
    top: 0;
    bottom: 0;
    background: linear-gradient(#202020, #111 45%);
}

.slider-val {
    position: relative;
}

.nudge-l,
.nudge-r {
    position: relative;
    width: 0;
    height: 0;
    border-top: 5px solid transparent;
    border-bottom: 5px solid transparent;
}

.nudge-l { border-right: 9px solid #c4c4c4; }
.nudge-r { border-left: 9px solid #c4c4c4; }

.drop {
    display: flex;
    align-items: center;
    justify-content: space-between;
    padding: 0 6px 0 8px;
}

.drop-small {
    width: 159px;
    flex: none;
}

.row .drop-small {
    margin-right: 9px;
}

.drop-wide {
    flex: 1;
    margin-right: 4px;
}

.drop-arrow {
    width: 0;
    height: 0;
    margin-top: 7px;
    border-left: 5px solid transparent;
    border-right: 5px solid transparent;
    border-top: 6px solid #d4d4d4;
}

.check {
    position: relative;
    width: 24px;
    flex: none;
}

/* tick mark over the box */
.check.on::after {
    content: "";
    position: absolute;
    left: 2px;
    top: 2px;
    width: 21px;
    height: 20px;
    background: #fff;
    clip-path: polygon(0 60%, 10% 48%, 30% 76%, 92% 0, 100% 0, 34% 100%, 24% 100%);
}

/* scrollbar */
.scrollbar {
    width: 22px;
    flex: none;
    background: linear-gradient(90deg, #282828 0 10px, #353535 10px 17px, #2a2a2a 17px);
    display: flex;
    flex-direction: column;
    padding-left: 4px;
}

.scroll-up {
    width: 0;
    height: 0;
    margin-top: 7px;
    border-left: 9px solid transparent;
    border-right: 9px solid transparent;
    border-bottom: 14px solid #f4f4f4;
}

.scroll-thumb {
    width: 18px;
    height: 204px;
    margin-top: 378px;
    flex: none;
    background: linear-gradient(#696969 45%, #7a7a7a 45% 46%, #696969 46% 48%, #7a7a7a 48% 49%, #696969 49%);
    border-left: 1px solid #555;
}

.scroll-down {
    width: 0;
    height: 0;
    margin-top: auto;
    margin-bottom: 2px;
    border-left: 9px solid transparent;
    border-right: 9px solid transparent;
    border-top: 12px solid #f4f4f4;
}

.scribble {
    position: absolute;
    left: 0;
    top: 0;
    width: 2452px;
    height: 1245px;
    fill: none;
    stroke: #f45a0a;
    stroke-width: 5;
    stroke-linecap: round;
    pointer-events: none;
}
```
